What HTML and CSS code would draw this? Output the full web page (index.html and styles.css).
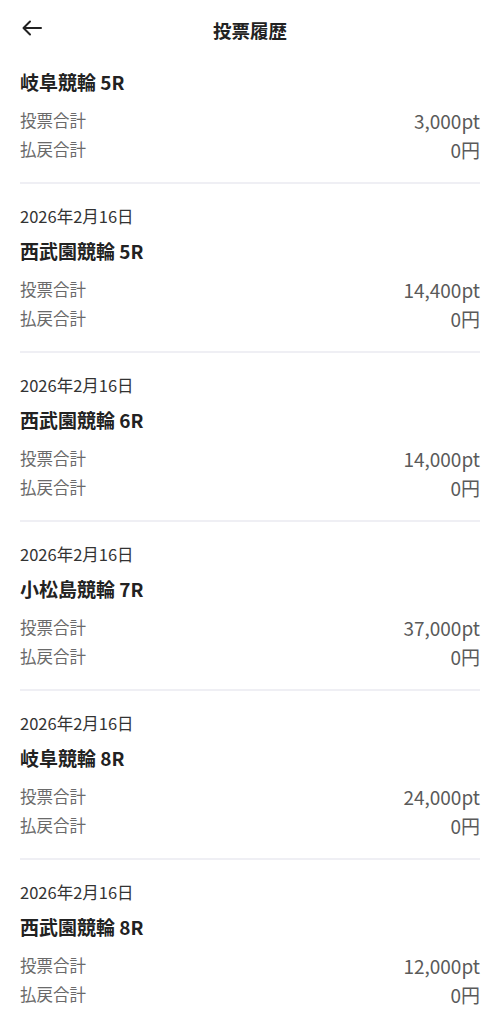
FILE: index.html
```html
<!DOCTYPE html>
<html lang="ja">
<head>
  <meta charset="UTF-8">
  <title>投票履歴</title>
  <link rel="stylesheet" href="styles.css">
</head>
<body>

  <header class="topbar">
    <button class="back" aria-label="戻る">
      <svg width="24" height="24" viewBox="0 0 24 24" fill="none" stroke="#222" stroke-width="2" stroke-linecap="round" stroke-linejoin="round">
        <path d="M21 12H4"/>
        <path d="M10 5.5L3.5 12L10 18.5"/>
      </svg>
    </button>
    <h1 class="topbar-title">投票履歴</h1>
    <span class="spacer"></span>
  </header>

  <main class="history">
    <section class="card first">
      <h2 class="card-title">岐阜競輪 5R</h2>
      <dl class="rows">
        <div class="row"><dt>投票合計</dt><dd>3,000pt</dd></div>
        <div class="row"><dt>払戻合計</dt><dd>0円</dd></div>
      </dl>
    </section>

    <section class="card">
      <p class="date">2026年2月16日</p>
      <h2 class="card-title">西武園競輪 5R</h2>
      <dl class="rows">
        <div class="row"><dt>投票合計</dt><dd>14,400pt</dd></div>
        <div class="row"><dt>払戻合計</dt><dd>0円</dd></div>
      </dl>
    </section>

    <section class="card">
      <p class="date">2026年2月16日</p>
      <h2 class="card-title">西武園競輪 6R</h2>
      <dl class="rows">
        <div class="row"><dt>投票合計</dt><dd>14,000pt</dd></div>
        <div class="row"><dt>払戻合計</dt><dd>0円</dd></div>
      </dl>
    </section>

    <section class="card">
      <p class="date">2026年2月16日</p>
      <h2 class="card-title">小松島競輪 7R</h2>
      <dl class="rows">
        <div class="row"><dt>投票合計</dt><dd>37,000pt</dd></div>
        <div class="row"><dt>払戻合計</dt><dd>0円</dd></div>
      </dl>
    </section>

    <section class="card">
      <p class="date">2026年2月16日</p>
      <h2 class="card-title">岐阜競輪 8R</h2>
      <dl class="rows">
        <div class="row"><dt>投票合計</dt><dd>24,000pt</dd></div>
        <div class="row"><dt>払戻合計</dt><dd>0円</dd></div>
      </dl>
    </section>

    <section class="card">
      <p class="date">2026年2月16日</p>
      <h2 class="card-title">西武園競輪 8R</h2>
      <dl class="rows">
        <div class="row"><dt>投票合計</dt><dd>12,000pt</dd></div>
        <div class="row"><dt>払戻合計</dt><dd>0円</dd></div>
      </dl>
    </section>
  </main>

</body>
</html>
```

FILE: styles.css
```css
body {
  font-family: "Noto Sans CJK JP", "Noto Sans", sans-serif;
  background: #fff;
  color: #222;
  margin: 0;
}

.topbar {
  display: grid;
  grid-template-columns: 60px 1fr 60px;
  align-items: center;
  height: 56px;
  padding: 0 20px;
}

.back {
  display: flex;
  align-items: center;
  background: none;
  border: none;
  padding: 0;
  width: 26px;
  height: 26px;
  cursor: pointer;
}

.topbar-title {
  margin: 4px 0 0;
  text-align: center;
  font-size: 18.5px;
  font-weight: 700;
  color: #222;
}

.card {
  margin: 0 20px;
  padding: 20px 0 18px;
  border-bottom: 2px solid #efeff4;
}

.card.first {
  padding-top: 12px;
}

.date {
  margin: 0 0 9px;
  font-size: 16.5px;
  line-height: 24px;
  color: #333;
}

.card-title {
  margin: 0;
  font-size: 19px;
  line-height: 28px;
  font-weight: 700;
  color: #222;
}

.rows {
  margin: 10px 0 0;
}

.row {
  display: flex;
  justify-content: space-between;
  align-items: center;
  height: 29px;
}

.row dt {
  font-size: 16.5px;
  line-height: 29px;
  color: #6a6a6a;
}

.row dd {
  margin: 0;
  font-size: 19px;
  line-height: 29px;
  color: #5a5a5a;
}
```
